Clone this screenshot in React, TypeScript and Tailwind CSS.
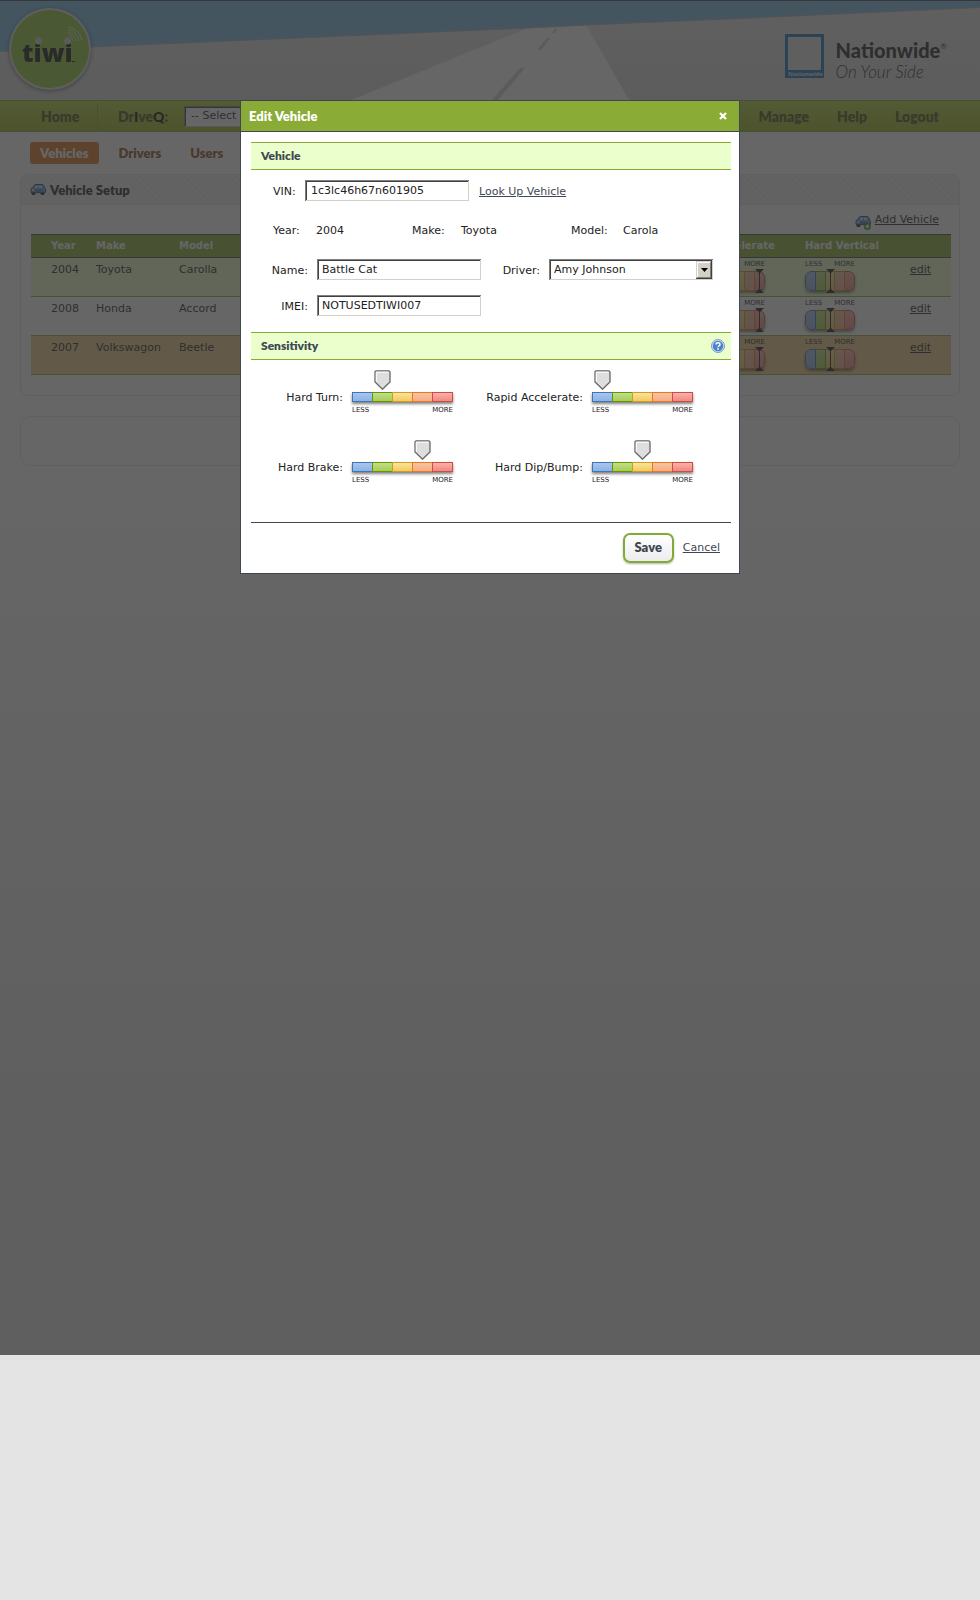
import { useId, useState, type ReactNode } from "react";

const body = "font-['DejaVu_Sans','Verdana',sans-serif]";
const heading = "font-['Lato','Open_Sans',sans-serif] font-extrabold";
const sunken =
  "h-[21px] bg-white text-[11px] text-[#222] shadow-[inset_1px_1px_0_#808080,inset_-1px_-1px_0_#d4d0c8,inset_2px_2px_0_#404040] outline-none";

const segments = [
  "border-[#3a76b8] bg-linear-to-b from-[#a9c6ec] to-[#8db2e2]",
  "border-[#649600] bg-linear-to-b from-[#c3de8a] to-[#a6cc58]",
  "border-[#cf9c1c] bg-linear-to-b from-[#fbe39a] to-[#f2cb60]",
  "border-[#f2741f] bg-linear-to-b from-[#f7c3a2] to-[#f4ae86]",
  "border-[#d24c3e] bg-linear-to-b from-[#fcb0aa] to-[#f08880]",
];

function CarIcon({ plus = false }: { plus?: boolean }) {
  return (
    <svg width="16" height={plus ? 15 : 12} viewBox={plus ? "0 0 16 15" : "0 1 16 12"} aria-hidden="true">
      <rect x="1.500" y="8" width="4" height="4" rx="1.500" fill="#222" />
      <rect x="10.500" y="8" width="4" height="4" rx="1.500" fill="#222" />
      <path
        d="M1 9.500V6.200Q1 5 2.600 4.800L4.200 2.300Q4.700 1.500 5.800 1.500H12Q13.200 1.500 13.600 2.500L14.600 5Q15.500 5.400 15.500 6.500V9Q15.500 9.600 14.800 9.600Z"
        fill="#5f9bd6"
        stroke="#1f4c80"
        strokeWidth="1"
      />
      <path d="M4.400 4.800 5.600 2.800H8V4.800ZM9 4.800V2.800H12L12.800 4.800Z" fill="#d9ecfb" />
      <rect x="2" y="6.300" width="2" height="1.400" fill="#fff2a8" />
      <rect x="5.500" y="7" width="6" height="1.400" fill="#2f5f95" />
      {plus && (
        <g>
          <circle cx="12.400" cy="11.400" r="3.300" fill="#4f9a2c" stroke="#2f7414" strokeWidth=".6" />
          <path d="M12.400 9.400V13.400M10.400 11.400H14.400" stroke="#fff" strokeWidth="1.300" />
        </g>
      )}
    </svg>
  );
}

function TiwiLogo() {
  return (
    <svg className="block drop-shadow-[0_1px_2px_rgba(0,0,0,0.5)]" width="82" height="82" viewBox="0 0 82 82" role="img" aria-label="tiwi">
      <circle cx="41" cy="41" r="41" fill="#e0e0e0" />
      <circle cx="41" cy="41" r="39" fill="#93c83a" />
      <text x="13" y="54" fontFamily="'Open Sans',sans-serif" fontWeight="800" fontSize="25" fill="#111">
        tiwi
      </text>
      <circle cx="29.500" cy="33" r="3.600" fill="#cfcfcf" />
      <circle cx="58.500" cy="33" r="3.600" fill="#cfcfcf" />
      <g fill="none" stroke="#dfe9d0" strokeWidth="1">
        <path d="M59.500 27.500Q63.500 28.500 64 33" />
        <path d="M59 24.800Q66 26 67 33" />
        <path d="M59 22.100Q68.500 23.500 70 33" />
        <path d="M59 19.400Q71 21 73 33" />
      </g>
      <rect x="63" y="53" width="3" height="1" fill="#111" />
    </svg>
  );
}

function Scenery() {
  return (
    <svg className="absolute inset-0 h-full w-full" viewBox="0 0 980 100" preserveAspectRatio="none" aria-hidden="true">
      <defs>
        <linearGradient id="ground" x1="0" y1="0" x2="0" y2="1">
          <stop offset="0" stopColor="#e6e6e6" />
          <stop offset="1" stopColor="#d8d8d8" />
        </linearGradient>
      </defs>
      <rect width="980" height="100" fill="url(#ground)" />
      <path d="M351 100 528 28 586 25 629 100Z" fill="#fff" />
      <path d="M555 29H558L554 33H552ZM547 38H550L541 50H537ZM520 68H525L498 100H492Z" fill="#d2d2d2" />
      <path d="M0 0H980V7.500L740 18.500 586 25 528 28 240 40.500 91 47 0 51.500Z" fill="#77bbe6" />
      <path d="M0 51.500 91 47 240 40.500 528 28 586 25 740 18.500 980 7.500" fill="none" stroke="#b4b4b4" strokeWidth="1" />
      <rect width="980" height="1" fill="#3f4752" />
    </svg>
  );
}

function Gauge({ marker }: { marker: number }) {
  return (
    <div className="w-[50px] pt-[3px]">
      <div className="flex justify-between text-[7px] leading-[7px]">
        <span>LESS</span>
        <span>MORE</span>
      </div>
      <div className="relative mt-[3px]">
        <div className="flex h-5 overflow-hidden rounded-[6px] shadow-[0_2px_3px_rgba(0,0,0,0.5)]">
          {segments.map((tone, i) => (
            <span
              key={tone}
              className={`flex-1 border ${i === 0 ? "rounded-l-[6px]" : "border-l-0"} ${i === 4 ? "rounded-r-[6px]" : ""} ${tone}`}
            />
          ))}
        </div>
        <svg className="absolute -top-[2px]" style={{ left: marker - 4 }} width="9" height="24" viewBox="0 0 9 24" aria-hidden="true">
          <path d="M0 0H9L5 4V20L9 24H0L4 20V4Z" fill="#1a1a1a" />
        </svg>
      </div>
    </div>
  );
}

const vehicles = [
  { year: 2004, make: "Toyota", model: "Carolla", tone: "bg-[#eaffcc]" },
  { year: 2008, make: "Honda", model: "Accord", tone: "bg-white" },
  { year: 2007, make: "Volkswagon", model: "Beetle", tone: "bg-[#f0cc86]" },
];

function VehicleTable() {
  return (
    <table className="w-full table-fixed border-collapse text-left text-[11px] leading-4 text-[#222]">
      <colgroup>
        <col className="w-[65px]" />
        <col className="w-[83px]" />
        <col className="w-[90px]" />
        <col />
        <col className="w-[90px]" />
        <col className="w-[105px]" />
        <col className="w-[41px]" />
      </colgroup>
      <thead>
        <tr className="h-[23px] border-y border-[#3f4752] bg-[#8aab36] text-[10px] text-white">
          <th className="p-0 pl-5">Year</th>
          <th className="p-0">Make</th>
          <th className="p-0">Model</th>
          <th className="p-0" aria-label="Driver" />
          <th className="p-0">Accelerate</th>
          <th className="p-0">Hard Vertical</th>
          <th className="p-0" aria-label="Actions" />
        </tr>
      </thead>
      <tbody>
        {vehicles.map((v) => (
          <tr key={v.year} className={`h-[39px] border-b border-[#8aab36] align-top ${v.tone}`}>
            <td className="p-0 pt-1 pl-5">{v.year}</td>
            <td className="p-0 pt-1">{v.make}</td>
            <td className="p-0 pt-1">{v.model}</td>
            <td />
            <td className="p-0">
              <Gauge marker={44} />
            </td>
            <td className="p-0">
              <Gauge marker={25} />
            </td>
            <td className="p-0 pt-1">
              <a href="#edit" className="underline">
                edit
              </a>
            </td>
          </tr>
        ))}
      </tbody>
    </table>
  );
}

function SensitivitySlider({ label, initial }: { label: string; initial: number }) {
  const id = useId();
  const [value, setValue] = useState(initial);
  return (
    <div className="flex justify-end gap-[9px]">
      <label htmlFor={id} className="pt-5 leading-4">
        {label}:
      </label>
      <div className="relative w-[101px]">
        <svg className="relative block" style={{ left: value * 20 - 18 }} width="17" height="20" viewBox="0 0 17 20" aria-hidden="true">
          <path d="M2.500 .8H14.500Q16 .8 16 2.300V12L8.500 19.200 1 12V2.300Q1 .8 2.500 .8Z" fill="#dedede" stroke="#666" strokeWidth="1.300" />
          <path d="M2.300 11.500V2.200H14.500" fill="none" stroke="#fff" strokeWidth="1" />
        </svg>
        <div className="mt-[2px] flex h-[10px] shadow-[0_2px_3px_rgba(0,0,0,0.5)]">
          {segments.map((tone, i) => (
            <span key={tone} className={`border ${i === 0 ? "w-[21px]" : "-ml-px w-[21px]"} ${tone}`} />
          ))}
        </div>
        <div className="mt-1 flex justify-between text-[7px] leading-[9px]">
          <span>LESS</span>
          <span>MORE</span>
        </div>
        <input
          id={id}
          type="range"
          min={1}
          max={5}
          value={value}
          onChange={(e) => setValue(Number(e.target.value))}
          className="absolute inset-x-0 top-0 m-0 h-8 w-full cursor-pointer opacity-0"
        />
      </div>
    </div>
  );
}

function SectionBar({ title, children }: { title: string; children?: ReactNode }) {
  return (
    <div className="flex h-7 items-center justify-between border-y border-[#8aab36] bg-[#eaffcc] pr-[6px] pl-[10px]">
      <h3 className={`${heading} text-[12px] leading-4 text-[#3f4752]`}>{title}</h3>
      {children}
    </div>
  );
}

function HelpIcon() {
  return (
    <svg width="14" height="14" viewBox="0 0 14 14" aria-hidden="true">
      <circle cx="7" cy="7" r="6.500" fill="#cfe0f4" stroke="#7d9cc6" strokeWidth="1" />
      <circle cx="7" cy="7" r="5.200" fill="#4a82c8" />
      <path d="M5 5.500Q5 3.700 7 3.700T9 5.400Q9 6.300 8 6.800T7 8.300" fill="none" stroke="#fff" strokeWidth="1.500" />
      <rect x="6.200" y="9.200" width="1.600" height="1.600" fill="#fff" />
    </svg>
  );
}

function EditVehicleDialog() {
  return (
    <section role="dialog" aria-labelledby="dialog-title" className="w-[500px] border border-[#3f4752] bg-white text-[11px] text-[#222]">
      <header className="flex h-[31px] items-center justify-between border-b border-[#3f4752] bg-[#8aab36] pr-3 pl-2">
        <h2 id="dialog-title" className={`${heading} text-[13px] leading-5 text-white`}>
          Edit Vehicle
        </h2>
        <button type="button" aria-label="Close">
          <svg width="8" height="8" viewBox="0 0 8 8" aria-hidden="true">
            <path d="M1 1 7 7M7 1 1 7" stroke="#fff" strokeWidth="2.300" />
          </svg>
        </button>
      </header>

      <form className="pt-[10px] pr-2 pl-[10px]" onSubmit={(e) => e.preventDefault()}>
        <SectionBar title="Vehicle" />
        <div className="flex items-end pt-[10px] pl-[22px] leading-[18px]">
          <label htmlFor="vin" className="w-8">
            VIN:
          </label>
          <input id="vin" defaultValue="1c3lc46h67n601905" className={`${sunken} w-[164px] px-[6px]`} />
          <a href="#lookup" className="ml-[10px] text-[#3f4752] underline">
            Look Up Vehicle
          </a>
        </div>
        <dl className="flex pt-[22px] pl-[22px] leading-4">
          <dt className="w-[43px]">Year:</dt>
          <dd className="w-[96px]">2004</dd>
          <dt className="w-[49px]">Make:</dt>
          <dd className="w-[110px]">Toyota</dd>
          <dt className="w-[52px]">Model:</dt>
          <dd>Carola</dd>
        </dl>
        <div className="grid grid-cols-[57px_164px_50px_164px] items-end gap-x-[9px] gap-y-[15px] pt-5 leading-[18px]">
          <label htmlFor="name" className="text-right">
            Name:
          </label>
          <input id="name" defaultValue="Battle Cat" className={`${sunken} px-[5px]`} />
          <label htmlFor="driver" className="text-right">
            Driver:
          </label>
          <div className="relative flex">
            <select id="driver" className={`${sunken} w-full appearance-none pt-px pr-5 pl-[5px]`}>
              <option>Amy Johnson</option>
            </select>
            <span className="pointer-events-none absolute top-[2px] right-[1px] flex h-[18px] w-4 items-center justify-center bg-[#d4d0c8] shadow-[inset_-1px_-1px_0_#404040,inset_1px_1px_0_#d4d0c8,inset_-2px_-2px_0_#808080,inset_2px_2px_0_#fff]">
              <svg width="7" height="4" viewBox="0 0 7 4" aria-hidden="true">
                <path d="M0 0H7L3.500 4Z" fill="#000" />
              </svg>
            </span>
          </div>
          <label htmlFor="imei" className="text-right">
            IMEI:
          </label>
          <input id="imei" defaultValue="NOTUSEDTIWI007" className={`${sunken} px-[5px]`} />
        </div>

        <div className="pt-4">
          <SectionBar title="Sensitivity">
            <button type="button" aria-label="Help">
              <HelpIcon />
            </button>
          </SectionBar>
        </div>
        <div className="grid grid-cols-[202px_240px] gap-y-[25px] pt-[10px] pb-[37px]">
          <SensitivitySlider label="Hard Turn" initial={2} />
          <SensitivitySlider label="Rapid Accelerate" initial={1} />
          <SensitivitySlider label="Hard Brake" initial={4} />
          <SensitivitySlider label="Hard Dip/Bump" initial={3} />
        </div>

        <footer className="flex items-center justify-end gap-[9px] border-t border-[#3f4752] py-[10px] pr-[11px]">
          <button
            type="submit"
            className={`${heading} h-[30px] w-[51px] rounded-[7px] border-2 border-[#82aa36] bg-linear-to-b from-white to-[#ececec] text-[13px] text-[#3f4752] shadow-[0_1px_2px_rgba(0,0,0,0.3)]`}
          >
            Save
          </button>
          <a href="#cancel" className="text-[#3f4752] underline">
            Cancel
          </a>
        </footer>
      </form>
    </section>
  );
}

export default function App() {
  return (
    <div className={`${body} min-h-screen bg-[#e4e4e4]`}>
      <div className="relative min-h-[1355px] bg-linear-to-b from-white from-35% to-[#e4e4e4] to-80%">
        <header className="relative flex h-[100px] items-start justify-between">
          <Scenery />
          <div className="relative pt-2 pl-[9px]">
            <TiwiLogo />
          </div>
          <div className="relative flex gap-3 pt-[34px] pr-[33px]">
            <svg width="39" height="44" viewBox="0 0 39 44" aria-hidden="true">
              <rect width="39" height="44" fill="#1874bd" />
              <rect x="3" y="3" width="33" height="33" fill="#e4e4e4" />
              <text x="3" y="42" fontFamily="'Open Sans',sans-serif" fontWeight="700" fontSize="6" fill="#e6e6e6">
                Nationwide
              </text>
            </svg>
            <div className="pt-1 font-['Lato',sans-serif] text-[#222]">
              <p className="flex items-start text-[20px] leading-6 font-black">
                Nationwide<span className="text-[8px] leading-4 font-normal">®</span>
              </p>
              <p className="text-[17px] leading-5 font-light italic">On Your Side</p>
            </div>
          </div>
        </header>

        <nav className={`${heading} flex h-8 items-center border-y border-[#7fa63a] bg-linear-to-b from-[#b4d43a] to-[#96b21e] pr-[41px] text-[14px] text-[#4a5418]`}>
          <div className="flex h-[26px] w-[98px] items-center border-r border-[#8aa32a] pl-[41px]">
            <a href="#home">Home</a>
          </div>
          <label htmlFor="driveq" className="w-[86px] pl-5">
            Dr<b className="text-black">I</b>ve<b className="text-black">Q</b>:
          </label>
          <select id="driveq" className={`${body} ${sunken} w-[170px] appearance-none bg-[#f4f4f4] pt-px pl-[7px] font-normal`}>
            <option>-- Select</option>
          </select>
          <input type="search" aria-label="Search" className="mr-5 ml-auto h-[22px] w-[150px] rounded-[4px] bg-white" />
          <div className="flex gap-7">
            <a href="#manage">Manage</a>
            <a href="#help">Help</a>
            <a href="#logout">Logout</a>
          </div>
        </nav>

        <main className="px-5 pt-[10px]">
          <div className={`${heading} flex items-center gap-5 pl-[10px] text-[13px] leading-[22px] text-[#8a4c18]`}>
            <a href="#vehicles" className="rounded-[3px] bg-[#d9701c] px-[10px] text-white">
              Vehicles
            </a>
            <a href="#drivers">Drivers</a>
            <a href="#users" className="ml-[9px]">
              Users
            </a>
          </div>

          <section className="mt-[10px] rounded-[8px] border border-[#e2e2e2] bg-white pb-5">
            <div className="flex h-[30px] items-center gap-1 rounded-t-[7px] border-b border-[#e2e2e2] bg-[repeating-linear-gradient(45deg,#f4f4f4_0px,#f4f4f4_2px,#e9e9e9_2px,#e9e9e9_4px)] pl-[9px]">
              <CarIcon />
              <h1 className={`${heading} text-[13px] leading-5 text-[#222]`}>Vehicle Setup</h1>
            </div>
            <div className="pt-[5px] pr-2 pl-[10px]">
              <div className="flex h-6 items-start justify-end gap-1 pr-3 text-[11px] leading-5">
                <span className="pt-[5px]">
                  <CarIcon plus />
                </span>
                <a href="#add" className="text-[#222] underline">
                  Add Vehicle
                </a>
              </div>
              <VehicleTable />
            </div>
          </section>

          <section className="mt-5 h-[50px] rounded-[10px] border border-[#e2e2e2] bg-white" />
        </main>

        <div className="absolute inset-0 bg-[#333]/75" />
        <div className="absolute inset-x-0 top-[100px] flex justify-center">
          <EditVehicleDialog />
        </div>
      </div>
    </div>
  );
}
